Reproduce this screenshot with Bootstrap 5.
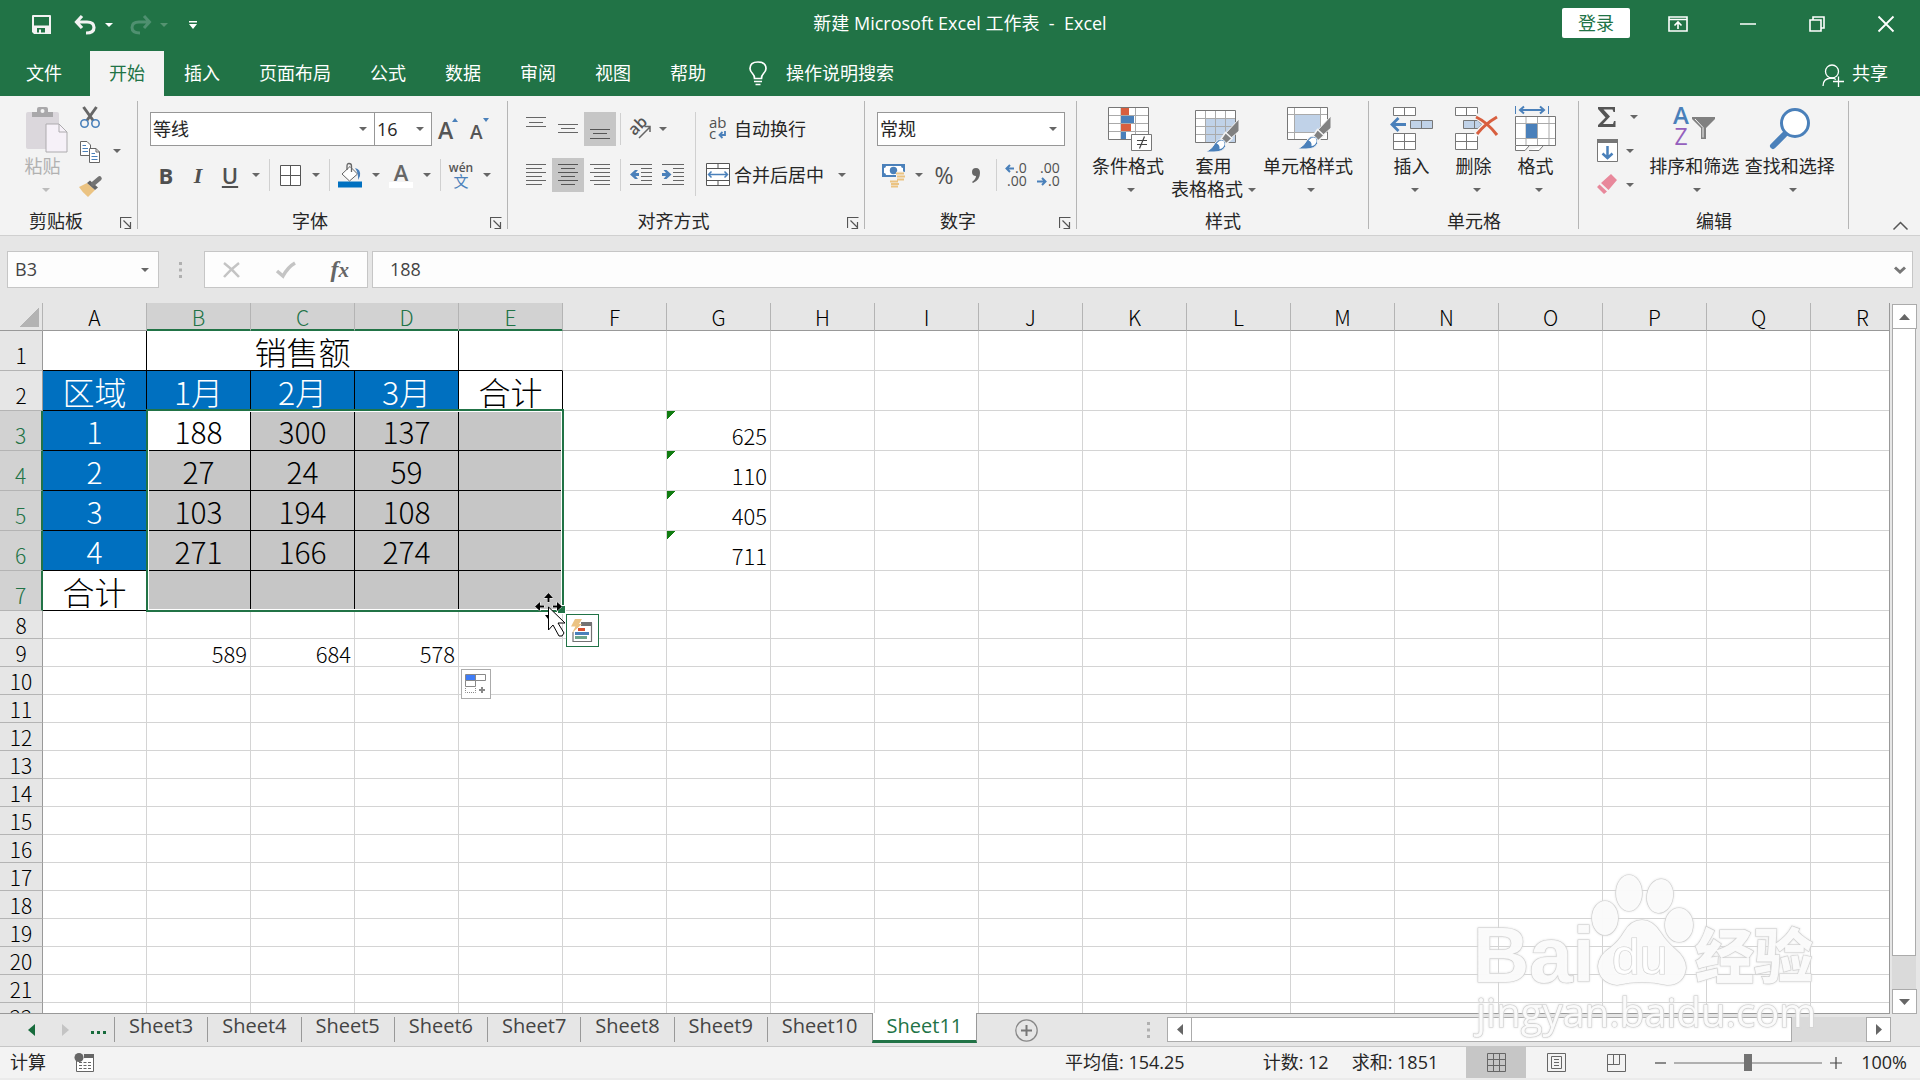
<!DOCTYPE html>
<html lang="zh-CN">
<head>
<meta charset="utf-8">
<meta name="viewport" content="width=device-width, initial-scale=1">
<title>新建 Microsoft Excel 工作表 - Excel</title>
<link href="https://cdn.jsdelivr.net/npm/bootstrap@5.3.0/dist/css/bootstrap.min.css" rel="stylesheet">
<style>
:root{--xl-green:#217346;--ink:#262626;--tool:#666;--blue:#4a80ba;--pale:#c0d2e8}
body{font-family:"Open Sans","Noto Sans CJK SC",sans-serif;font-size:18px;line-height:23px;color:var(--ink);background:#e6e6e6}
button{font:inherit;color:inherit;background:none;border:0;padding:0}
svg{display:block;overflow:visible;flex:none}
.titlebar{height:51px;background:var(--xl-green)}
.side{flex:1 1 0}
.doctitle{line-height:46px}
.qat{height:49px;margin-left:32px}
.login{width:68px;height:30px;background:#fff;color:var(--xl-green);border-radius:2px;margin-right:14px}
.winbtn{width:69px;height:50px}
.tabs{height:45px;background:var(--xl-green);padding:0 32px 0 7px;gap:1px}
.tabs .nav-link{padding:0 19px;height:45px;line-height:44px;color:#fff;border-radius:0}
.tabs .nav-link.active{background:#f3f3f3;color:var(--xl-green)}
.filetab{margin-right:8px}
.tellme{margin-left:23px;gap:19px}
.ribbon{height:140px;background:#f3f3f3;border-bottom:1px solid #d0d0d0}
.rgroup{position:relative;display:flex;flex-direction:column;height:139px;flex:none}
.rgroup::after{content:"";position:absolute;right:0;top:5px;bottom:6px;width:1px;background:#b5b5b5}
.g-clip{width:138px}.g-font{width:370px}.g-align{width:357px}.g-num{width:212px}.g-style{width:292px}.g-cell{width:210px}.g-edit{width:270px}
.rbody{height:112px;padding:16px 12px 0}
.rbody.big{display:flex;gap:7px;padding:9px 15px 0}
.rbody.two,.stack{display:flex;flex-direction:column;gap:12px}
.rlabel{display:flex;align-items:center;height:27px}
.rlabel span{flex:1;text-align:center}
.launch{width:26px;height:24px;padding:2px 0 0 2px;display:flex;justify-content:center;align-items:center}
.trow{display:flex;height:34px}
.tb{width:32px;height:34px;display:flex;align-items:center;justify-content:center;color:#505050}
.tb.on{background:#c6c6c6}
.glyph{font-size:22px;font-weight:700}
.serif{font-family:"Liberation Serif",serif}
.percent{font-size:23px}
.dd{width:19px;height:34px;display:flex;align-items:center;justify-content:center}
.tri{display:inline-block;border:4px solid transparent;border-top-color:var(--tool);border-bottom:0}
.tri.pale{border-top-color:#bcbcbc}
.tri.white{border-top-color:#fff}
.tri.faded{border-top-color:#559371}
.vsep{width:1px;height:32px;margin:1px 4px;background:#d0d0d0}
.tallsep{width:1px;height:84px;margin:0 4px 0 6px;background:#d0d0d0}
.bigbtn{min-width:55px;display:flex;flex-direction:column;align-items:center;white-space:nowrap}
.bigbtn:disabled{color:#b1b1b1}
.bigbtn svg{margin-bottom:2px}
.bigbtn .tri{margin:10px 0 0 6px}
.bigbtn .line2{display:flex;align-items:center;gap:5px}
.bigbtn .line2 .tri{margin:0}
.smallcol{margin-top:-5px}
.smallcol .tb{width:26px}
.lbtn{height:34px;padding-left:6px;display:flex;align-items:center;gap:4px}
.pick{height:34px;flex:none;padding:0 24px 0 2px;border:1px solid #979797;border-radius:0;background:#fff no-repeat right 7px center/8px 4px;--caret:url("data:image/svg+xml,%3Csvg xmlns='http://www.w3.org/2000/svg' viewBox='0 0 8 4'%3E%3Cpath d='M0 0h8L4 4z' fill='%23666'/%3E%3C/svg%3E");background-image:var(--caret);appearance:none;color:var(--ink);font-size:18px}
.pick-font{width:225px}.pick-size{width:58px;margin-left:-1px}.pick-num{width:188px}
.collapser{margin:120px 12px 0 auto;height:18px}
.sharebtn{gap:8px}
.fbar{padding:15px 7px;height:67px}
.fbox{height:37px;border:1px solid #c6c6c6;background:#fdfdfd}
.namebox{width:152px;padding:0 9px 0 7px}
.fbox input{border:0;padding:0;background:none;width:100%;min-width:0;color:#444;outline:0}
.grip{width:45px}
.fxbox{width:164px;padding:0 18px}
.finput{padding:0 6px 0 17px}
.fxbtn{font:italic 700 24px/30px "Liberation Serif",serif;color:#666}
.work{min-height:0;flex:1 1 0}
.viewport{position:relative;flex:1 1 0;min-width:0;overflow:hidden;border-right:1px solid #999;border-bottom:1px solid #999;background:#fff;margin-bottom:-1px}
.grid{border-collapse:separate;border-spacing:0;table-layout:fixed;width:1915px;font-family:"Noto Sans CJK SC",sans-serif;font-size:21px;font-weight:300;line-height:25px;color:#000}
.grid th{font-weight:300;background:#e6e6e6;text-align:center;vertical-align:bottom;padding:0;border-right:1px solid #b4b4b4;border-bottom:1px solid #b4b4b4}
.grid thead th{height:28px;border-bottom-color:#999}
.grid thead th.sel{background:#d2d2d2;color:var(--xl-green);border-bottom-color:var(--xl-green);box-shadow:inset 0 -1px var(--xl-green)}
.grid tbody th{border-right-color:#999}
.grid tbody th.sel{background:#d2d2d2;color:var(--xl-green);border-right:2px solid var(--xl-green)}
.grid td{padding:0 3px 0 0;border-right:1px solid #d4d4d4;border-bottom:1px solid #d4d4d4;font-size:22px;text-align:right;vertical-align:bottom;height:28px;white-space:nowrap}
.grid tr.tall td{height:40px;padding-bottom:2px}
.grid tr.tall th{padding-bottom:2px}
.grid tr.tall td.bx{padding:0;text-align:center;font-size:30px;line-height:37px;border-color:#000}
.grid tr.tall td.zh{font-size:32px}
.grid td.rb{border-bottom-color:#000!important}
.grid td.rr{border-right-color:#000!important}
.grid td.hd{background:#0070c0;color:#fff}
.grid td.in{background:#c6c6c6}
.grid td.err{background:linear-gradient(135deg,#107c10 6px,transparent 6px)}
.corner{display:block;width:19px;height:19px;margin:0 0 3px 20px;background:linear-gradient(135deg,transparent 50%,#b3b3b3 50%)}
.range{position:absolute;left:146px;top:106px;width:418px;height:203px;border:2px solid var(--xl-green);box-shadow:inset 0 0 0 1px #fff;pointer-events:none}
.range::after{content:"";position:absolute;right:-3px;bottom:-3px;width:7px;height:7px;background:var(--xl-green);outline:1px solid #fff}
.tag{position:absolute;background:#fff;display:flex;align-items:center;justify-content:center}
.tag-quick{left:566px;top:311px;width:33px;height:33px;padding:0 2px 2px 0;border:1px solid var(--xl-green)}
.tag-fill{left:461px;top:366px;width:30px;height:30px;border:1px solid #ababab}
.pointer{position:absolute;left:535px;top:290px}
.vscroll{width:30px;padding:1px 4px 0 2px;margin-bottom:-1px}
.sbtn{width:25px;height:25px;background:#fff;border:1px solid #ababab;display:flex;align-items:center;justify-content:center;flex:none}
.vtrack{flex:1;background:#dadada;min-height:0}
.vthumb{height:95%;background:#fff;border:1px solid #ababab;border-top:0}
.sheetbar{height:33px}
.sheetnav{width:114px;gap:27px;padding-left:28px}
.dots{margin:6px 0 0 -5px}
.stab{display:flex;height:30px;color:#444;font-size:20px;line-height:25px}
.stab::before{content:"";width:1px;height:25px;margin-top:4px;background:#999}
.stab a{padding:0 14px;color:inherit;text-decoration:none}
.stab.cur{background:#fff;color:var(--xl-green);border-bottom:3px solid var(--xl-green);border-right:1px solid #999;border-left:1px solid #999;font-weight:500;position:relative}
.stab.cur::before{display:none}
.addsheet{margin:5px 0 0 38px;height:24px}
.splitgrip{padding-right:17px}
.hscroll{width:753px;flex:none;padding:4px 29px 0 0}
.htrack{flex:1;height:25px;background:#dadada}
.hthumb{width:89%;height:25px;background:#fff;border:1px solid #ababab;border-left:0}
.statusbar{height:34px;border-top:1px solid #c6c6c6;border-bottom:2px solid #ebebeb;background:#f3f3f3;white-space:nowrap;padding:0 13px 0 10px}
.macro{margin-left:28px}
.st-count{margin-left:78px}
.st-sum{margin:0 28px 0 23px}
.zoomout{margin-left:9px}
.st-zoom{margin-left:19px}
.vbtn{width:60px;height:31px;display:flex;align-items:center;justify-content:center}
.vbtn.on{background:#c6c6c6}
.zoomer{appearance:none;width:148px;height:17px;background:linear-gradient(#b0b0b0,#b0b0b0) no-repeat center/100% 2px;margin:0 8px}
.zoomer::-webkit-slider-thumb{appearance:none;width:8px;height:17px;background:#737373;border:0;border-radius:0}
.wmark{position:fixed;right:100px;bottom:30px;pointer-events:none;filter:drop-shadow(0 0 1px #ddd)}
</style>
<script src="https://cdn.jsdelivr.net/npm/bootstrap@5.3.0/dist/js/bootstrap.bundle.min.js"></script>
</head>
<body class="vh-100 d-flex flex-column overflow-hidden">

<header class="titlebar d-flex align-items-start text-white">
  <div class="side"><div class="qat d-flex align-items-center">
    <button aria-label="保存"><svg width="19" height="19" viewBox="0 0 19 19"><path d="M0 1Q0 0 1 0H18Q19 0 19 1V19H2L0 17zM2 2V10.500H17V2zM5 13V17.500H7V14.500H9V17.500H13V13z" fill="#f3f3f3" fill-rule="evenodd"/></svg></button>
    <button aria-label="撤消" class="ms-4"><svg width="22" height="19" viewBox="0 0 22 19"><path d="M7 1 1.500 7 7 13M2 7H12Q19 7 19 12.500 19 18 11 18" fill="none" stroke="#f3f3f3" stroke-width="3.200"/></svg></button>
    <button aria-label="撤消选项" class="dd"><i class="tri white ms-1"></i></button>
    <button aria-label="恢复" class="ms-3"><svg width="22" height="19" viewBox="0 0 22 19"><path d="M12 1 17.500 7 12 13M17 7H7Q0 7 0 12.500 0 18 8 18" fill="none" stroke="#4f9070" stroke-width="3"/></svg></button>
    <button aria-label="恢复选项" class="dd"><i class="tri faded"></i></button>
    <button aria-label="自定义快速访问工具栏" class="ms-3"><svg width="8" height="8" viewBox="0 0 8 8"><path d="M0 0H8V1.500H0zM0 3H8L4 8z" fill="#fff"/></svg></button>
  </div></div>
  <div class="doctitle">新建 Microsoft Excel 工作表&nbsp; -&nbsp; Excel</div>
  <div class="side d-flex justify-content-end">
    <button class="login mt-2">登录</button>
    <button class="winbtn d-flex align-items-center justify-content-center" aria-label="功能区显示选项"><svg width="20" height="16" viewBox="1 2 20 16"><path d="M1 1H19V15H1zM1 3.500H19M10 13V6M6.500 9.500 10 6 13.500 9.500" transform="translate(0 1)" fill="none" stroke="#fff" stroke-width="1.600"/></svg></button>
    <button class="winbtn d-flex align-items-center justify-content-center" aria-label="最小化"><svg width="16" height="2"><path d="M0 0H16" stroke="#fff" stroke-width="1.500"/></svg></button>
    <button class="winbtn d-flex align-items-center justify-content-center" aria-label="还原"><svg width="16" height="16" viewBox="0 1 16 16"><path d="M1 4H12V15H1zM4 4V1H15V12H12" fill="none" stroke="#fff" stroke-width="1.600"/></svg></button>
    <button class="winbtn d-flex align-items-center justify-content-center" aria-label="关闭"><svg width="16" height="16" viewBox="0 1 16 16"><path d="M.5.5 15.500 15.500M15.500.5.5 15.500" stroke="#fff" stroke-width="1.800"/></svg></button>
  </div>
</header>

<nav class="tabs nav flex-nowrap text-nowrap">
  <a class="nav-link filetab" href="#">文件</a>
  <a class="nav-link active" href="#">开始</a>
  <a class="nav-link" href="#">插入</a>
  <a class="nav-link" href="#">页面布局</a>
  <a class="nav-link" href="#">公式</a>
  <a class="nav-link" href="#">数据</a>
  <a class="nav-link" href="#">审阅</a>
  <a class="nav-link" href="#">视图</a>
  <a class="nav-link" href="#">帮助</a>
  <button class="tellme d-flex align-items-center text-white"><svg width="18" height="25" viewBox="0 0 18 25"><path d="M5.500 17.500Q5.500 14.500 3.500 12.500 1 10 1 7.500 1 1 9 1 17 1 17 7.500 17 10 14.500 12.500 12.500 14.500 12.500 17.500zM5 20.500H13M6.500 23.500H11.500" fill="none" stroke="#fff" stroke-width="1.700"/></svg>操作说明搜索</button>
  <button class="sharebtn ms-auto d-flex align-items-center text-white"><svg width="22" height="23" viewBox="0 0 22 23" class="mt-1"><path d="M1 22Q1 14.500 9 14 12 14 14 15.500M16.500 12.500V23M11 17.500H22" fill="none" stroke="#fff" stroke-width="1.300"/><circle cx="10" cy="7.500" r="6.500" fill="none" stroke="#fff" stroke-width="1.300"/></svg>共享</button>
</nav>

<svg width="0" height="0" class="position-absolute">
  <defs>
    <symbol id="corner-arrow" viewBox="0 0 12 12"><path d="M.5 11V.5H11.500M3.500 3.500 10.500 10.500M10.500 5V11.500H4.500" fill="none" stroke="#555" stroke-width="1.200"/></symbol>
    <g id="brush"><path d="M47 14V26L38 34 32 30z" fill="#808080" stroke="#f3f3f3"/><path d="M33.500 27.500 40 33.500 34 39 29 34z" fill="#808080" stroke="#f3f3f3" stroke-width="1.500"/><path d="M14 47Q21 43 23 38 26 33.500 31 34.500 35 37 33.500 41.500 31 47 22 47z" fill="#4a80ba" stroke="#f3f3f3"/><path d="M24.500 38.500Q28 34.500 31.500 36 34 39 31 42.500 29 44 27.500 44 28 39.500 24.500 38.500z" fill="#fff"/></g>
  </defs>
</svg>

<section class="ribbon d-flex" aria-label="功能区">
  <div class="rgroup g-clip">
    <div class="rbody big">
      <button class="bigbtn" disabled><svg width="44" height="48" viewBox="0 0 44 48"><rect x="5" y="7" width="33" height="37" rx="2" fill="#dbd7dc"/><path d="M11 7H16V4Q16 2 18 2H25Q27 2 27 4V7H32V12H11z" fill="#a9a8aa"/><circle cx="21.500" cy="6" r="2" fill="#f3f3f3"/><path d="M25 19H38L46 27V47H25z" fill="#f6f1f8" stroke="#adabae"/><path d="M38 19V27H46" fill="none" stroke="#adabae"/></svg>粘贴<i class="tri pale"></i></button>
      <div class="smallcol">
        <div class="trow"><button class="tb" aria-label="剪切"><svg width="20" height="22" viewBox="0 0 20 22"><path d="M3.500 1 13.500 15M16.500 1 6.500 15" stroke="#666" stroke-width="3"/><circle cx="4.500" cy="17.500" r="3.700" fill="#f3f3f3" stroke="#4a80ba" stroke-width="1.600"/><circle cx="15.500" cy="17.500" r="3.700" fill="#f3f3f3" stroke="#4a80ba" stroke-width="1.600"/></svg></button></div>
        <div class="trow"><button class="tb" aria-label="复制"><svg width="20" height="22" viewBox="0 -1 20 22"><path d="M.5.5H7L10.500 4V14.500H.5z" fill="#fff" stroke="#666"/><path d="M2.500 4.500H6M2.500 7.500H8M2.500 10.500H8" stroke="#4a80ba"/><path d="M9.500 7.500H16L19.500 11V21.500H9.500z" fill="#fff" stroke="#666"/><path d="M16 7.500V11H19.500" fill="none" stroke="#666"/><path d="M11.500 12.500H15M11.500 15.500H17.500M11.500 18.500H17.500" stroke="#4a80ba"/></svg></button><button class="dd ms-1" aria-label="复制选项"><i class="tri"></i></button></div>
        <div class="trow"><button class="tb" aria-label="格式刷"><svg width="23" height="20" viewBox="0 -2 23 20"><path d="M0 10 8 6 16 13 9 20Q3 15 0 10z" fill="#ebc382"/><path d="M8 6 11 3.500 19 10.500 16 13z" fill="#666"/><path d="M14 7 20.500 1.500" stroke="#737373" stroke-width="4.500" stroke-linecap="round"/></svg></button></div>
      </div>
    </div>
    <div class="rlabel"><span>剪贴板</span><button class="launch" aria-label="剪贴板设置"><svg width="12" height="12"><use href="#corner-arrow"/></svg></button></div>
  </div>

  <div class="rgroup g-font">
    <div class="rbody two">
      <div class="trow"><select class="pick pick-font" aria-label="字体"><option>等线</option></select><select class="pick pick-size" aria-label="字号"><option>16</option></select>
        <button class="tb" aria-label="增大字号"><svg width="22" height="22" viewBox="0 0 22 22"><text x="1" y="21" font-size="23" font-weight="600" fill="#555">A</text><path d="M15 4H21L18 0z" fill="#4a80ba"/></svg></button>
        <button class="tb" aria-label="减小字号"><svg width="20" height="22" viewBox="0 0 20 22"><text x="0" y="21" font-size="19" font-weight="600" fill="#555">A</text><path d="M13 0H19L16 4z" fill="#4a80ba"/></svg></button></div>
      <div class="trow">
        <button class="tb glyph" aria-label="加粗">B</button><button class="tb glyph serif fst-italic" aria-label="倾斜">I</button><button class="tb glyph" aria-label="下划线"><u class="fw-semibold">U</u></button><button class="dd" aria-label="下划线选项"><i class="tri"></i></button><span class="vsep"></span>
        <button class="tb" aria-label="边框"><svg width="21" height="21" viewBox="0 0 21 21"><path d="M.5.500H20.500V20.500H.5zM.5 10.500H20.500M10.500.5V20.500" fill="#fff" stroke="#555"/></svg></button><button class="dd" aria-label="边框选项"><i class="tri"></i></button><span class="vsep"></span>
        <button class="tb" aria-label="填充颜色"><svg width="24" height="25" viewBox="0 0 24 25"><rect y="18.500" width="24" height="6" fill="#0070c0"/><path d="M12 3.500 19.500 11 11.500 18 4 11z" fill="#fff" stroke="#666"/><path d="M9 7V3Q9 .5 11 .5 13.500.5 13.500 3V9" fill="none" stroke="#666" stroke-width="1.300"/><path d="M17 5Q23 6 22 13L20 17Q20.500 10 17 5z" fill="#4a80ba"/></svg></button><button class="dd" aria-label="填充颜色选项"><i class="tri"></i></button>
        <button class="tb" aria-label="字体颜色"><svg width="24" height="25" viewBox="0 0 24 25"><rect y="19" width="24" height="6" fill="#fff"/><text x="12" y="18" font-size="22" font-weight="600" fill="#666" text-anchor="middle">A</text></svg></button><button class="dd" aria-label="字体颜色选项"><i class="tri"></i></button><span class="vsep"></span>
        <button class="tb" aria-label="拼音"><svg width="22" height="25" viewBox="0 0 22 25"><text x="11" y="9" font-size="12" font-weight="600" fill="#555" text-anchor="middle">wén</text><text x="11" y="24" font-size="15" fill="#4a80ba" text-anchor="middle">文</text></svg></button><button class="dd" aria-label="拼音选项"><i class="tri"></i></button>
      </div>
    </div>
    <div class="rlabel"><span>字体</span><button class="launch" aria-label="字体设置"><svg width="12" height="12"><use href="#corner-arrow"/></svg></button></div>
  </div>

  <div class="rgroup g-align">
    <div class="rbody d-flex">
      <div class="stack">
        <div class="trow">
          <button class="tb" aria-label="顶端对齐"><svg width="20" height="22"><path d="M0 .5H20M3 5.500H17M0 9.500H20" stroke="#666" transform="translate(0 -1)"/></svg></button>
          <button class="tb" aria-label="垂直居中"><svg width="20" height="22"><path d="M0 6.500H20M3 10.500H17M0 14.500H20" stroke="#666"/></svg></button>
          <button class="tb on" aria-label="底端对齐"><svg width="20" height="22"><path d="M0 11.500H20M3 15.500H17M0 20.500H20" stroke="#555"/></svg></button>
          <span class="vsep"></span>
          <button class="tb" aria-label="方向"><svg width="22" height="22" viewBox="0 0 22 22"><text x="2" y="16" font-size="16" font-weight="600" fill="#555" transform="rotate(-45 6 14)">ab</text><path d="M9 20 20 9M20 14V8.500H14.500" fill="none" stroke="#666" stroke-width="1.500"/></svg></button><button class="dd" aria-label="方向选项"><i class="tri me-2"></i></button>
        </div>
        <div class="trow">
          <button class="tb" aria-label="左对齐"><svg width="20" height="22"><path d="M0 .5H20M0 4.500H16M0 8.500H20M0 12.500H16M0 16.500H20M0 20.500H16" stroke="#666"/></svg></button>
          <button class="tb on" aria-label="居中"><svg width="20" height="22"><path d="M0 .5H20M3 4.500H17M0 8.500H20M3 12.500H17M0 16.500H20M3 20.500H17" stroke="#555"/></svg></button>
          <button class="tb" aria-label="右对齐"><svg width="20" height="22"><path d="M0 .5H20M4 4.500H20M0 8.500H20M4 12.500H20M0 16.500H20M4 20.500H20" stroke="#666"/></svg></button>
          <span class="vsep"></span>
          <button class="tb" aria-label="减少缩进量"><svg width="22" height="22"><path d="M0 .5H22M11 4.500H22M11 8.500H22M11 12.500H22M11 16.500H22M0 20.500H22" stroke="#666"/><path d="M0 10.500 5 6H8L5.500 9H9V12H5.500L8 15H5z" fill="#4a80ba"/></svg></button>
          <button class="tb" aria-label="增加缩进量"><svg width="22" height="22"><path d="M0 .5H22M11 4.500H22M11 8.500H22M11 12.500H22M11 16.500H22M0 20.500H22" stroke="#666"/><path d="M9.500 10.500 4.500 6H1.500L4 9H0V12H4L1.500 15H4.500z" fill="#4a80ba"/></svg></button>
        </div>
      </div>
      <span class="tallsep"></span>
      <div class="stack">
        <button class="lbtn"><svg width="24" height="24" viewBox="0 0 24 24"><text x="3" y="11" font-size="15" fill="#505050">ab</text><text x="3" y="22" font-size="15" fill="#505050">c</text><path d="M19 14V18H14M16.500 15 13.500 18 16.500 21" fill="none" stroke="#4a80ba" stroke-width="1.800"/></svg>自动换行</button>
        <div class="d-flex"><button class="lbtn"><svg width="24" height="24" viewBox="0 0 24 24"><path d="M.5.500H23.500V22.500H.5zM.5 5.500H23.500M.5 17.500H23.500M12 .5V5.500M12 17.500V22.500" fill="#fff" stroke="#555"/><path d="M2.500 11.500H21.500M5.500 8.500 2.500 11.500 5.500 14.500M18.500 8.500 21.500 11.500 18.500 14.500" fill="none" stroke="#4a80ba" stroke-width="1.500"/></svg>合并后居中</button><button class="dd ms-2" aria-label="合并选项"><i class="tri"></i></button></div>
      </div>
    </div>
    <div class="rlabel"><span>对齐方式</span><button class="launch" aria-label="对齐设置"><svg width="12" height="12"><use href="#corner-arrow"/></svg></button></div>
  </div>

  <div class="rgroup g-num">
    <div class="rbody two">
      <select class="pick pick-num" aria-label="数字格式"><option>常规</option></select>
      <div class="trow">
        <button class="tb" aria-label="会计数字格式"><svg width="23" height="23" viewBox="0 0 23 23"><rect width="23" height="13" fill="#4a80ba"/><path d="M2 4Q4 4 4 2H19Q19 4 21 4V9Q19 9 19 11H4Q4 9 2 9z" fill="#fff"/><circle cx="11.500" cy="6.500" r="3.700" fill="#4a80ba"/><path d="M14 8Q18 6 23 8V17Q20 19 17 18V21Q12 24 8 21V16Q11 14 14 15z" fill="#f3f3f3"/><path d="M14 9.500H22M15 12.500H23M15 15.500H22M8 17.500H16M9 20H17M9 22.500H16" stroke="#ebc382" stroke-width="2"/></svg></button><button class="dd" aria-label="会计格式选项"><i class="tri"></i></button>
        <button class="tb percent" aria-label="百分比样式">%</button>
        <button class="tb" aria-label="千位分隔样式"><svg width="10" height="16" viewBox="0 0 10 16"><path d="M1 15Q5 12 5 9 1 9 1 5 1 1 5 1 9 1 9 6 9 13 2 16z" fill="#666"/></svg></button>
        <span class="vsep"></span>
        <button class="tb" aria-label="增加小数位数"><svg width="24" height="24" viewBox="0 0 24 24"><text x="10" y="10" font-size="14" fill="#505050">.0</text><text x="2" y="23" font-size="14" fill="#505050">.00</text><path d="M9 5.500H1.500M5 2 1.500 5.500 5 9" fill="none" stroke="#4a80ba" stroke-width="2"/></svg></button>
        <button class="tb" aria-label="减少小数位数"><svg width="24" height="24" viewBox="0 0 24 24"><text x="3" y="10" font-size="14" fill="#505050">.00</text><text x="11" y="23" font-size="14" fill="#505050">.0</text><path d="M0 18.500H8M5 15 8.500 18.500 5 22" fill="none" stroke="#4a80ba" stroke-width="2"/></svg></button>
      </div>
    </div>
    <div class="rlabel"><span>数字</span><button class="launch" aria-label="数字设置"><svg width="12" height="12"><use href="#corner-arrow"/></svg></button></div>
  </div>

  <div class="rgroup g-style">
    <div class="rbody big">
      <button class="bigbtn"><svg width="44" height="48" viewBox="0 0 44 48"><path d="M2.500 2.500H42.500V34.500H2.500z" fill="#fff"/><path d="M2.500 10.500H42.500M2.500 18.500H42.500M2.500 26.500H42.500M15 2.500V34.500M29.500 2.500V34.500" stroke="#aaa"/><path d="M2.500 2.500H42.500V34.500H2.500z" fill="none" stroke="#777"/><path d="M15 3H23V10H15zM15 19H25V26H15z" fill="#d85f3f"/><path d="M15 11H28V18H15zM15 27H20V34H15z" fill="#4a80ba"/><path d="M25.500 29.500H45.500V45.500H25.500z" fill="#fff" stroke="#777"/><path d="M31 35.500H41M31 39.500H41M38.500 31.500 33.500 43.500" stroke="#444" stroke-width="1.200"/></svg>条件格式<i class="tri"></i></button>
      <button class="bigbtn"><svg width="44" height="48" viewBox="0 0 44 48"><path d="M3.500 5.500H43.500V37.500H3.500z" fill="#fff"/><path d="M14 14H44V37.500H14z" fill="#c0d2e8"/><path d="M3.500 13.500H43.500M3.500 21.500H43.500M3.500 29.500H43.500M13.500 5.500V37.500M23.500 5.500V37.500M33.500 5.500V37.500" stroke="#aaa"/><path d="M3.500 5.500H43.500V37.500H3.500z" fill="none" stroke="#777"/><use href="#brush"/></svg>套用<span class="line2">表格格式<i class="tri"></i></span></button>
      <button class="bigbtn"><svg width="44" height="48" viewBox="0 0 44 48"><path d="M1.500 2.500H41.500V34.500H1.500z" fill="#fff"/><path d="M8.500 10H35V27.500H8.500z" fill="#c0d2e8"/><path d="M1.500 9.500H41.500M1.500 27.500H41.500M8.500 2.500V34.500M34.500 2.500V34.500" stroke="#aaa"/><path d="M1.500 2.500H41.500V34.500H1.500z" fill="none" stroke="#777"/><use href="#brush" x="-2" y="-3"/></svg>单元格样式<i class="tri"></i></button>
    </div>
    <div class="rlabel"><span>样式</span></div>
  </div>

  <div class="rgroup g-cell">
    <div class="rbody big">
      <button class="bigbtn"><svg width="44" height="48" viewBox="0 0 44 48"><path d="M3.500 2.500H25.500V10.500H3.500zM14.500 2.500V10.500M3.500 28.500H25.500V44.500H3.500zM14.500 28.500V44.500M3.500 36.500H25.500" fill="#fff" stroke="#777"/><path d="M20.500 15.500H42.500V23.500H20.500zM31.500 15.500V23.500" fill="#c0d2e8" stroke="#777"/><path d="M16 19.500H2M8.500 13 2 19.500 8.500 26" fill="none" stroke="#4a80ba" stroke-width="2.800"/></svg>插入<i class="tri"></i></button>
      <button class="bigbtn"><svg width="44" height="48" viewBox="0 0 44 48"><path d="M3.500 2.500H25.500V10.500H3.500zM14.500 2.500V10.500M3.500 28.500H25.500V44.500H3.500zM14.500 28.500V44.500M3.500 36.500H25.500" fill="#fff" stroke="#777"/><path d="M11.500 15.500H26L30 19.500 26 23.500H11.500zM22.500 15.500V23.500" fill="#c0d2e8" stroke="#777"/><path d="M24 11Q35 17 45 30M45 12Q33 19 24 30" fill="none" stroke="#f3f3f3" stroke-width="6"/><path d="M24 12Q35 17 45 30M45 12Q33 19 25 29" fill="none" stroke="#d85f3f" stroke-width="3"/></svg>删除<i class="tri"></i></button>
      <button class="bigbtn"><svg width="44" height="48" viewBox="0 0 44 48"><path d="M1.500 41V45.500H11L15 41M15 45.500H25L29 41" fill="#fff" stroke="#777"/><path d="M1.500 11.500H41.500V40.500H1.500z" fill="#fff"/><path d="M1.500 18.500H41.500M1.500 33.500H41.500M12 11.500V40.500M23.500 11.500V40.500M35 11.500V40.500" stroke="#aaa"/><path d="M1.500 11.500H41.500V40.500H1.500z" fill="none" stroke="#777"/><path d="M12 19H23V33H12z" fill="#4a80ba"/><path d="M1.500 1V9M34.500 1V9" stroke="#4a80ba"/><path d="M6 5H30M10 1.500 6 5 10 8.500M26 1.500 30 5 26 8.500" fill="none" stroke="#4a80ba" stroke-width="2"/></svg>格式<i class="tri"></i></button>
    </div>
    <div class="rlabel"><span>单元格</span></div>
  </div>

  <div class="rgroup g-edit">
    <div class="rbody big">
      <div class="smallcol">
        <div class="trow"><button class="tb" aria-label="自动求和"><svg width="18" height="20" viewBox="0 0 18 20"><path d="M0 0H17V5H15.500L14.500 2.500H5.500L12 9.500 5 17H15L16 14H17.500V20H0V18L7.500 10.500 0 2z" fill="#555"/></svg></button><button class="dd ms-1" aria-label="求和选项"><i class="tri"></i></button></div>
        <div class="trow"><button class="tb" aria-label="填充"><svg width="21" height="23" viewBox="0 1 21 23"><path d="M.5.500H20.500V22.500H.5z" fill="#fff" stroke="#777"/><path d="M0 0H21V4H0z" fill="#777"/><path d="M10.500 7V19M5.500 14.500 10.500 19 15.500 14.500" fill="none" stroke="#4a80ba" stroke-width="2.500"/></svg></button><button class="dd" aria-label="填充选项"><i class="tri"></i></button></div>
        <div class="trow"><button class="tb" aria-label="清除"><svg width="20" height="20" viewBox="0 1 20 20"><path d="M14 0 20 6 11.500 16 4 9zM2.500 10.500 10 17.500 7 20 0 13z" fill="#e8889b"/></svg></button><button class="dd" aria-label="清除选项"><i class="tri"></i></button></div>
      </div>
      <button class="bigbtn"><svg width="44" height="48" viewBox="0 0 44 48"><text x="9" y="19" font-size="24" font-weight="600" fill="#4a80ba" text-anchor="middle">A</text><text x="9" y="40" font-size="23" fill="#9560bd" text-anchor="middle">Z</text><path d="M20 12H43V14L34 23V34H29V23L20 14z" fill="#808080"/><path d="M23 14 31 22.500V32.500" fill="none" stroke="#f3f3f3"/></svg>排序和筛选<i class="tri"></i></button>
      <button class="bigbtn"><svg width="44" height="48" viewBox="0 0 44 48"><path d="M5 41 18 28" stroke="#4a80ba" stroke-width="6" stroke-linecap="round"/><circle cx="27" cy="18" r="13.500" fill="#fff" stroke="#4a80ba" stroke-width="3"/></svg>查找和选择<i class="tri"></i></button>
    </div>
    <div class="rlabel"><span>编辑</span></div>
  </div>
  <button class="collapser" aria-label="折叠功能区"><svg width="15" height="9" viewBox="0 0 15 9"><path d="M.5 8.500 7.500 1.500 14.500 8.500" fill="none" stroke="#555" stroke-width="1.500"/></svg></button>
</section>

<div class="fbar d-flex">
  <div class="fbox namebox d-flex align-items-center"><input value="B3" aria-label="名称框"><i class="tri flex-shrink-0"></i></div>
  <div class="grip d-flex align-items-center justify-content-center"><svg width="3" height="16" viewBox="1 0 3 16"><path d="M0 0H3V3H0zM0 6.500H3V9.500H0zM0 13H3V16H0z" fill="#b0b0b0"/></svg></div>
  <div class="fbox fxbox d-flex align-items-center justify-content-between">
    <button aria-label="取消"><svg width="17" height="16" viewBox="0 0 17 16"><path d="M1 1Q9 7 16 15M16 1Q7 8 1 15" fill="none" stroke="#c4c4c4" stroke-width="2.500"/></svg></button>
    <button aria-label="输入"><svg width="20" height="16" viewBox="-1 0 20 16"><path d="M1 9 7 14Q12 5 19 1" fill="none" stroke="#c4c4c4" stroke-width="3.500"/></svg></button>
    <button aria-label="插入函数" class="fxbtn">f<small>x</small></button>
  </div>
  <div class="fbox finput d-flex align-items-center flex-fill ms-1"><input value="188" aria-label="编辑栏"><svg width="12" height="8" viewBox="0 0 12 8"><path d="M1 1.500 6 6 11 1.500" fill="none" stroke="#777" stroke-width="3"/></svg></div>
</div>

<main class="work d-flex">
  <div class="viewport">
    <table class="grid" id="grid"></table>
    <div class="range"></div>
    <button class="tag tag-quick" aria-label="快速分析"><svg width="22" height="24" viewBox="0 0 22 24"><path d="M2 14V23.500H20.500V5" fill="none" stroke="#737373" stroke-width="1.200"/><path d="M10 4H21V8H10z" fill="#737373"/><path d="M7 10H14V13H7z" fill="#d8502f"/><path d="M4 14H18V17H4z" fill="#4a80ba"/><path d="M4 18H16V21H4z" fill="#6ca58c"/><path d="M4 1H11L8 6H11L1 15 4.500 8.500H0z" fill="#ebc382"/></svg></button>
    <button class="tag tag-fill" aria-label="自动填充选项"><svg width="22" height="20" viewBox="0 0 22 20"><path d="M.5.500H20.500V6.500H.5zM.5 6.500V12.500H10.500V.5" fill="none" stroke="#888"/><path d="M1 1H10V6H1z" fill="#3f7cf6"/><path d="M.5 14V18.500H10.500V14" fill="none" stroke="#888" stroke-dasharray="1 1"/><path d="M17 13V19M14 16H20" stroke="#888" stroke-width="2"/></svg></button>
    <svg class="pointer" width="30" height="44" viewBox="0 0 30 44"><path d="M13.500 0 18 5H14.500V9H12.500V5H9zM0 13.500 5 9V12.500H9V14.500H5V18zM27 13.500 22 9V12.500H18V14.500H22V18z" fill="#000" stroke="#fff" paint-order="stroke"/><path d="M10 22H13V26z" fill="#000"/><path d="M13.500 14V37L18 32 24 43H27L29 40 23 30H30z" fill="#fff" stroke="#000"/></svg>
  </div>
  <div class="vscroll d-flex flex-column">
    <button class="sbtn" aria-label="向上滚动"><svg width="11" height="6"><path d="M0 6H11L5.500 0z" fill="#666"/></svg></button>
    <div class="vtrack"><div class="vthumb"></div></div>
    <button class="sbtn" aria-label="向下滚动"><svg width="11" height="6"><path d="M0 0H11L5.500 6z" fill="#666"/></svg></button>
  </div>
</main>

<div class="sheetbar d-flex">
  <div class="sheetnav d-flex align-items-center">
    <button aria-label="上一工作表"><svg width="7" height="12"><path d="M7 0V12L0 6z" fill="#176b3c"/></svg></button>
    <button aria-label="下一工作表"><svg width="7" height="12"><path d="M0 0V12L7 6z" fill="#c4c4c4"/></svg></button>
    <button aria-label="更多工作表" class="dots"><svg width="16" height="4"><path d="M0 0H3V3H0zM6 0H9V3H6zM12 0H15V3H12z" fill="#176b3c"/></svg></button>
  </div>
  <ul class="list-unstyled d-flex mb-0">
    <li class="stab"><a href="#">Sheet3</a></li>
    <li class="stab"><a href="#">Sheet4</a></li>
    <li class="stab"><a href="#">Sheet5</a></li>
    <li class="stab"><a href="#">Sheet6</a></li>
    <li class="stab"><a href="#">Sheet7</a></li>
    <li class="stab"><a href="#">Sheet8</a></li>
    <li class="stab"><a href="#">Sheet9</a></li>
    <li class="stab"><a href="#">Sheet10</a></li>
    <li class="stab cur"><a href="#">Sheet11</a></li>
  </ul>
  <button class="addsheet" aria-label="新工作表"><svg width="23" height="23" viewBox="0 0 23 23"><circle cx="11.500" cy="11.500" r="10.700" fill="none" stroke="#888" stroke-width="1.300"/><path d="M11.500 6V17M6 11.500H17" stroke="#777" stroke-width="2"/></svg></button>
  <div class="splitgrip flex-fill d-flex align-items-center justify-content-end"><svg width="3" height="16"><path d="M0 0H3V3H0zM0 6.500H3V9.500H0zM0 13H3V16H0z" fill="#b0b0b0"/></svg></div>
  <div class="hscroll d-flex">
    <button class="sbtn" aria-label="向左滚动"><svg width="6" height="11"><path d="M6 0V11L0 5.500z" fill="#666"/></svg></button>
    <div class="htrack"><div class="hthumb"></div></div>
    <button class="sbtn" aria-label="向右滚动"><svg width="6" height="11"><path d="M0 0V11L6 5.500z" fill="#666"/></svg></button>
  </div>
</div>

<footer class="statusbar d-flex align-items-center">
  <span>计算</span>
  <button aria-label="宏录制" class="macro"><svg width="20" height="19" viewBox="0 0 20 19"><path d="M2.500 8V18.500H19.500V3" fill="#fff" stroke="#666"/><path d="M10 1H20V5H10z" fill="#666"/><circle cx="5" cy="4.500" r="4.500" fill="#666"/><path d="M5 9.500H17M5 12.500H17M5 15.500H17" stroke="#666" stroke-dasharray="3 1.500"/></svg></button>
  <span class="ms-auto">平均值: 154.25</span>
  <span class="st-count">计数: 12</span>
  <span class="st-sum">求和: 1851</span>
  <button class="vbtn on" aria-label="普通视图"><svg width="19" height="19" viewBox="0 0 19 19"><path d="M.5.500H18.500V18.500H.5zM6.500.5V18.500M12.500.5V18.500M.5 6.500H18.500M.5 12.500H18.500" fill="none" stroke="#666"/></svg></button>
  <button class="vbtn" aria-label="页面布局视图"><svg width="19" height="19" viewBox="0 0 19 19"><path d="M.5.500H18.500V18.500H.5zM4.500 3.500H14.500V15.500H4.500zM7 6.500H12M7 9.500H12M7 12.500H12" fill="none" stroke="#666"/></svg></button>
  <button class="vbtn" aria-label="分页预览"><svg width="19" height="18" viewBox="0 0 19 18"><path d="M.5.500H18.500V17.500H.5zM.5 10.500H12.500V.5M6.500.5V10.500" fill="none" stroke="#666"/></svg></button>
  <button aria-label="缩小" class="zoomout"><svg width="11" height="12"><path d="M0 6H11" stroke="#444" stroke-width="1.200"/></svg></button>
  <input type="range" class="zoomer" aria-label="显示比例" min="0" max="100" value="50">
  <button aria-label="放大"><svg width="12" height="12"><path d="M0 6H12M6 0V12" stroke="#444" stroke-width="1.200"/></svg></button>
  <span class="st-zoom">100%</span>
</footer>

<svg class="wmark" width="350" height="180" viewBox="0 0 350 180" aria-hidden="true">
  <g fill="#fff" fill-opacity=".85" stroke="#cfcfcf" stroke-width="1.200" paint-order="stroke">
    <ellipse cx="159" cy="23" rx="13" ry="18"/><ellipse cx="190" cy="26" rx="13" ry="17" transform="rotate(10 190 26)"/>
    <ellipse cx="135" cy="48" rx="13" ry="17"/><ellipse cx="209" cy="55" rx="14" ry="17"/>
    <path d="M172 50Q183 50 191 63 196 71 205 79 216 88 216 98 214 115 197 115 184 112 172 112 160 112 147 115 129 113 128 96 129 85 140 78 149 71 154 62 161 50 172 50z"/>
    <text x="3" y="112" font-family="Liberation Sans" font-weight="700" font-size="78">Bai</text>
    <text x="142" y="104" font-family="Liberation Sans" font-size="50">du</text>
    <text x="225" y="108" font-family="Noto Sans CJK SC" font-weight="900" font-size="59">经验</text>
    <text x="6" y="157" font-family="Open Sans" font-size="40">jingyan.baidu.com</text>
  </g>
</svg>

<script>
const letters = 'ABCDEFGHIJKLMNOPQR'.split('');
const values = {
  B1:'销售额', A2:'区域', B2:'1月', C2:'2月', D2:'3月', E2:'合计',
  A3:1, B3:188, C3:300, D3:137, G3:625,
  A4:2, B4:27, C4:24, D4:59, G4:110,
  A5:3, B5:103, C5:194, D5:108, G5:405,
  A6:4, B6:271, C6:166, D6:274, G6:711,
  A7:'合计', B9:589, C9:684, D9:578
};
function cellClass(col, row) {
  const c = letters.indexOf(col), cls = [];
  if (row <= 7 && c <= 4) {
    if (row === 1) {
      cls.push('rb');
      if (c === 0) cls.push('rr');
      if (c === 1) cls.push('bx', 'zh');
    } else {
      cls.push('bx');
      if (row === 2 || row === 7) cls.push('zh');
      if ((row === 2 && c < 4) || (c === 0 && row < 7)) cls.push('hd');
      if (row > 2 && c > 0 && !(row === 3 && c === 1)) cls.push('in');
    }
  }
  if (col === 'G' && row >= 3 && row <= 6) cls.push('err');
  return cls.join(' ');
}
let html = '<colgroup><col style="width:43px">' + letters.map(() => '<col style="width:104px">').join('') + '</colgroup>';
html += '<thead><tr><th aria-label="全选"><span class="corner"></span></th>' +
  letters.map((l, i) => `<th scope="col"${i > 0 && i < 5 ? ' class="sel"' : ''}>${l}</th>`).join('') + '</tr></thead><tbody>';
for (let r = 1; r <= 22; r++) {
  html += `<tr${r < 8 ? ' class="tall"' : ''}><th scope="row"${r > 2 && r < 8 ? ' class="sel"' : ''}>${r}</th>`;
  for (const l of letters) {
    if (r === 1 && (l === 'C' || l === 'D')) continue;
    html += `<td${r === 1 && l === 'B' ? ' colspan="3"' : ''} class="${cellClass(l, r)}">${values[l + r] ?? ''}</td>`;
  }
  html += '</tr>';
}
document.getElementById('grid').innerHTML = html + '</tbody>';
</script>
</body>
</html>
